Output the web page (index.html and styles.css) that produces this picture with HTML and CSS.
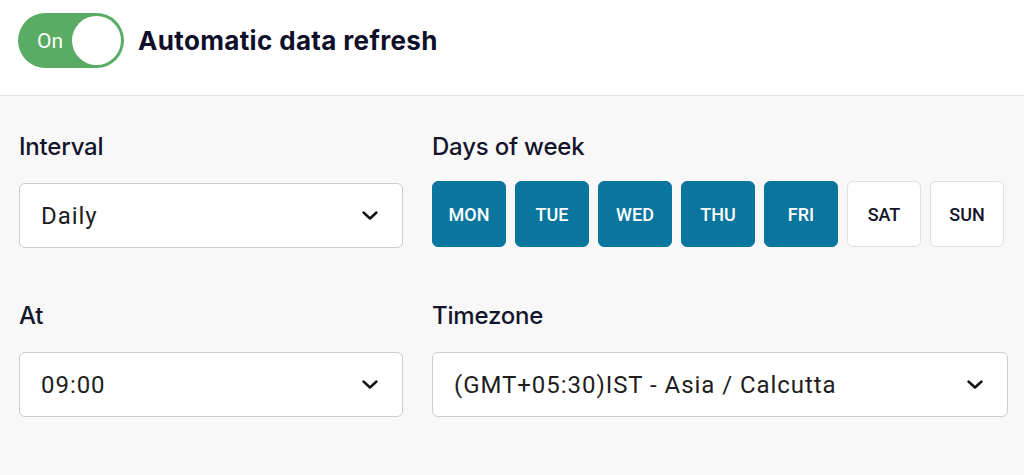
FILE: index.html
```html
<!DOCTYPE html>
<html lang="en">
<head>
<meta charset="utf-8">
<title>Automatic data refresh</title>
<link rel="stylesheet" href="styles.css">
</head>
<body>
<header class="header">
  <div class="toggle">
    <span class="toggle-label">On</span>
    <span class="toggle-knob"></span>
  </div>
  <h1 class="title">Automatic data refresh</h1>
</header>
<main class="panel">
  <div class="field">
    <label class="label">Interval</label>
    <div class="select">
      <span class="select-value">Daily</span>
      <svg class="chevron" width="16" height="9" viewBox="0 0 16 9"><path d="M1.5 1.5 L8 7.5 L14.5 1.5" fill="none" stroke="#111" stroke-width="2.4" stroke-linecap="round" stroke-linejoin="round"/></svg>
    </div>
  </div>
  <div class="field">
    <label class="label">Days of week</label>
    <div class="days">
      <span class="day active">MON</span>
      <span class="day active">TUE</span>
      <span class="day active">WED</span>
      <span class="day active">THU</span>
      <span class="day active">FRI</span>
      <span class="day">SAT</span>
      <span class="day">SUN</span>
    </div>
  </div>
  <div class="field">
    <label class="label">At</label>
    <div class="select">
      <span class="select-value">09:00</span>
      <svg class="chevron" width="16" height="9" viewBox="0 0 16 9"><path d="M1.5 1.5 L8 7.5 L14.5 1.5" fill="none" stroke="#111" stroke-width="2.4" stroke-linecap="round" stroke-linejoin="round"/></svg>
    </div>
  </div>
  <div class="field">
    <label class="label">Timezone</label>
    <div class="select">
      <span class="select-value">(GMT+05:30)IST - Asia / Calcutta</span>
      <svg class="chevron" width="16" height="9" viewBox="0 0 16 9"><path d="M1.5 1.5 L8 7.5 L14.5 1.5" fill="none" stroke="#111" stroke-width="2.4" stroke-linecap="round" stroke-linejoin="round"/></svg>
    </div>
  </div>
</main>
</body>
</html>
```
FILE: styles.css
```css
html, body {
  margin: 0;
  padding: 0;
}
body {
  width: 1024px;
  height: 475px;
  overflow: hidden;
  background: #f8f8f9;
  font-family: "Inter", "Roboto", sans-serif;
  color: #14142b;
}
.header {
  height: 96px;
  background: #ffffff;
  border-bottom: 1px solid #dcdfe5;
  display: flex;
  align-items: flex-start;
  padding: 13px 0 0 18px;
  box-sizing: border-box;
  gap: 14px;
}
.toggle {
  width: 106px;
  height: 55px;
  border-radius: 28px;
  background: #5aab64;
  display: flex;
  align-items: center;
  justify-content: space-between;
  padding: 0 3px 0 19px;
  box-sizing: border-box;
}
.toggle-label {
  font-family: "Roboto", sans-serif;
  color: #ffffff;
  font-size: 21px;
  font-weight: 400;
}
.toggle-knob {
  width: 49px;
  height: 49px;
  border-radius: 50%;
  background: #ffffff;
}
.title {
  margin: 0;
  font-size: 26px;
  font-weight: 700;
  line-height: 55px;
  letter-spacing: 0.35px;
  color: #0f0f2a;
}
.panel {
  display: grid;
  grid-template-columns: 384px 576px;
  column-gap: 29px;
  row-gap: 53px;
  padding: 36px 0 0 19px;
}
.field {
  display: flex;
  flex-direction: column;
  gap: 21px;
}
.label {
  font-size: 24px;
  font-weight: 500;
  line-height: 30px;
  letter-spacing: -0.2px;
  color: #14142b;
}
.select {
  height: 65px;
  box-sizing: border-box;
  background: #ffffff;
  border: 1px solid #cccccc;
  border-radius: 6px;
  display: flex;
  align-items: center;
  justify-content: space-between;
  padding: 0 24px 0 21px;
}
.select-value {
  font-family: "Roboto", sans-serif;
  font-size: 24px;
  letter-spacing: 0.95px;
  color: #1e1e1e;
}
.chevron {
  display: block;
}
.days {
  display: flex;
  gap: 9px;
  margin-top: -2px;
}
.day {
  width: 74px;
  height: 66px;
  box-sizing: border-box;
  border-radius: 6px;
  border: 1px solid #dde1e6;
  background: #ffffff;
  display: flex;
  align-items: center;
  justify-content: center;
  font-family: "Roboto", sans-serif;
  font-size: 18px;
  font-weight: 500;
  color: #14142b;
}
.day.active {
  background: #0b769d;
  border-color: #0b769d;
  color: #ffffff;
}
```
